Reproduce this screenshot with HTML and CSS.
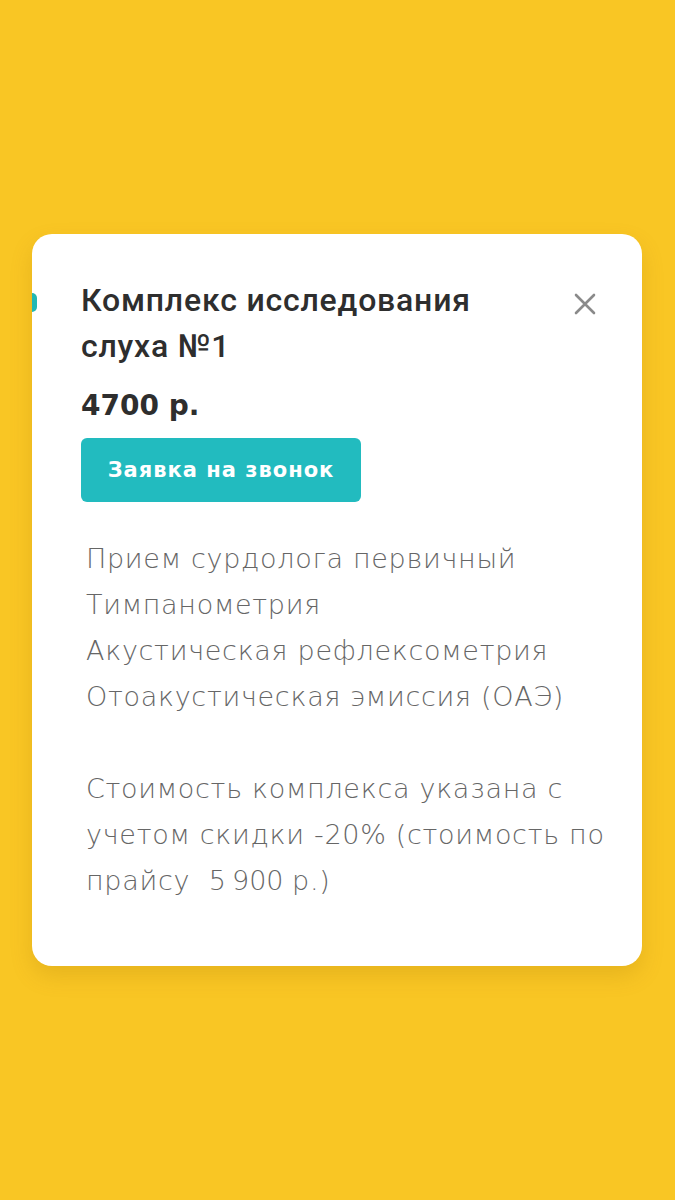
FILE: index.html
```html
<!DOCTYPE html>
<html lang="ru">
<head>
    <meta charset="UTF-8">
    <meta name="viewport" content="width=device-width, initial-scale=1.0">
    <title>Комплекс исследования слуха №1</title>
    <link rel="stylesheet" href="styles.css">
</head>
<body>
    <div class="popup">
        <span class="popup-marker"></span>
        <div class="popup-head">
            <h2 class="popup-title">Комплекс исследования слуха №1</h2>
            <button type="button" class="close-btn" aria-label="Закрыть">
                <svg width="22" height="22" viewBox="0 0 22 22">
                    <path d="M2 2 L20 20 M20 2 L2 20" stroke="#8a8a8a" stroke-width="2.6" stroke-linecap="round" fill="none"/>
                </svg>
            </button>
        </div>
        <div class="price">4700 р.</div>
        <button type="button" class="call-btn">Заявка на звонок</button>
        <div class="description">
            <p>Прием сурдолога первичный<br>Тимпанометрия<br>Акустическая рефлексометрия<br>Отоакустическая эмиссия (ОАЭ)</p>
            <p class="note">Стоимость комплекса указана с учетом скидки -20% (стоимость по прайсу&nbsp; 5&#8239;900 р.)</p>
        </div>
    </div>
</body>
</html>
```

FILE: styles.css
```css
* {
    margin: 0;
    padding: 0;
    box-sizing: border-box;
}

body {
    background: #f9c624;
    min-height: 1200px;
    padding: 234px 33px 0 32px;
    font-family: 'DejaVu Sans', sans-serif;
}

.popup {
    position: relative;
    background: #ffffff;
    height: 732px;
    padding: 43px 40px 0 49px;
    border-radius: 20px;
    box-shadow: 0 10px 22px rgba(150, 100, 0, 0.18);
}

.popup-marker {
    position: absolute;
    left: 0;
    top: 59px;
    width: 5px;
    height: 19px;
    background: #22b8b4;
    border-radius: 0 10px 10px 0;
}

.popup-head {
    display: flex;
    justify-content: space-between;
    align-items: flex-start;
}

.popup-title {
    font-family: Roboto, sans-serif;
    font-weight: 500;
    font-size: 32px;
    letter-spacing: 0.8px;
    line-height: 46px;
    color: #2e2e2e;
    width: 440px;
}

.close-btn {
    border: none;
    background: none;
    margin-top: 16px;
    margin-right: 6px;
    width: 22px;
    height: 22px;
    cursor: pointer;
}

.price {
    font-weight: 700;
    font-size: 28px;
    line-height: 40px;
    color: #2e2e2e;
    margin-top: 17px;
}

.call-btn {
    display: block;
    margin-top: 12px;
    width: 280px;
    height: 64px;
    border: none;
    border-radius: 6px;
    background: #22bbbf;
    color: #ffffff;
    font-family: 'DejaVu Sans', sans-serif;
    font-weight: 700;
    font-size: 21px;
    letter-spacing: 1px;
    cursor: pointer;
}

.description {
    margin-top: 34px;
    margin-right: -14px;
    padding-left: 5px;
    color: #666666;
    font-weight: 300;
    font-size: 27px;
    letter-spacing: 0.7px;
    line-height: 46px;
}

.note {
    margin-top: 46px;
}
```
